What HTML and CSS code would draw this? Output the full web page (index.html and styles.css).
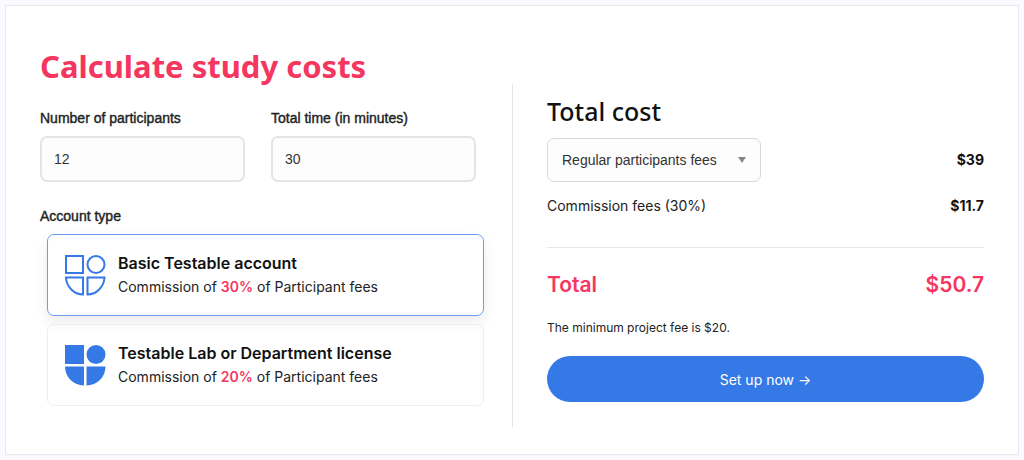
FILE: index.html
```html
<!DOCTYPE html>
<html lang="en">
<head>
    <meta charset="UTF-8">
    <meta name="viewport" content="width=device-width, initial-scale=1.0">
    <title>Calculate study costs</title>
    <link rel="stylesheet" href="styles.css">
</head>
<body>
    <form class="calculator">
        <div class="settings">
            <h1 class="title">Calculate study costs</h1>
            <div class="fields">
                <div class="field">
                    <label class="label" for="participants">Number of participants</label>
                    <input class="control" id="participants" type="text" inputmode="numeric" value="12">
                </div>
                <div class="field">
                    <label class="label" for="minutes">Total time (in minutes)</label>
                    <input class="control" id="minutes" type="text" inputmode="numeric" value="30">
                </div>
            </div>
            <div class="label" id="account-label">Account type</div>
            <div class="accounts" role="radiogroup" aria-labelledby="account-label">
                <label class="account">
                    <input class="account-radio" type="radio" name="account" value="basic" checked>
                    <svg class="account-icon outline" viewBox="0 0 42 42" aria-hidden="true">
                        <rect x="2" y="2" width="17" height="17"/>
                        <circle cx="32" cy="10.5" r="8.5"/>
                        <path d="M2 23.5H19V40.5C10 40.5 2.5 33 2 23.5Z"/>
                        <path d="M23.5 23.5H40.5C40 33 32.5 40.5 23.5 40.5Z"/>
                    </svg>
                    <span class="account-text">
                        <span class="account-name">Basic Testable account</span>
                        <span class="account-fee">Commission of <b class="rate">30%</b> of Participant fees</span>
                    </span>
                </label>
                <label class="account">
                    <input class="account-radio" type="radio" name="account" value="license">
                    <svg class="account-icon solid" viewBox="0 0 42 42" aria-hidden="true">
                        <rect x="1" y="1" width="19" height="19"/>
                        <circle cx="32" cy="10.5" r="9.5"/>
                        <path d="M1 22.5H20V41.5C9.5 41.5 1 33 1 22.5Z"/>
                        <path d="M22.5 22.5H41.5C41.5 33 33 41.5 22.5 41.5Z"/>
                    </svg>
                    <span class="account-text">
                        <span class="account-name">Testable Lab or Department license</span>
                        <span class="account-fee">Commission of <b class="rate">20%</b> of Participant fees</span>
                    </span>
                </label>
            </div>
        </div>
        <div class="summary">
            <h2 class="subtitle">Total cost</h2>
            <div class="row">
                <div class="select-wrap">
                    <select class="control select" aria-label="Participants fees">
                        <option>Regular participants fees</option>
                    </select>
                    <svg class="arrow" viewBox="0 0 8 6" aria-hidden="true"><path d="M0 0H8L4 6Z"/></svg>
                </div>
                <span class="amount">$39</span>
            </div>
            <div class="row commission">
                <span>Commission fees (30%)</span>
                <span class="amount">$11.7</span>
            </div>
            <div class="row total">
                <span>Total</span>
                <span>$50.7</span>
            </div>
            <p class="note">The minimum project fee is $20.</p>
            <button class="submit" type="button">Set up now →</button>
        </div>
    </form>
</body>
</html>
```
FILE: styles.css
```css
* { margin: 0; padding: 0; box-sizing: border-box; }
body {
    padding: 5px;
    background: #f9f9ff;
    color: #222;
    font-family: Inter, sans-serif;
    font-size: 14px;
    line-height: 20px;
}
.calculator {
    display: grid;
    grid-template-columns: 1fr 1fr;
    padding: 0 34px;
    background: #fff;
    border: 1px solid #e8e8ef;
}
.settings {
    padding: 40px 36px 48px 0;
}
.title {
    margin-bottom: 22px;
    color: #f5365f;
    font-family: "Noto Sans", sans-serif;
    font-size: 31px;
    font-weight: 700;
    line-height: 40px;
}
.fields {
    display: grid;
    grid-template-columns: 1fr 1fr;
    gap: 26px;
    margin-bottom: 24px;
}
.label {
    display: block;
    margin-bottom: 8px;
    font-family: "Liberation Sans", sans-serif;
    font-size: 14px;
    -webkit-text-stroke: 0.4px #222;
}
.control {
    display: block;
    width: 100%;
    height: 46px;
    padding: 0 12px;
    background: #fdfdfd;
    border: 2px solid #e5e5e5;
    border-radius: 7px;
    color: #333;
    font-family: "Liberation Sans", sans-serif;
    font-size: 14px;
}
.accounts {
    display: grid;
    gap: 8px;
    margin: 0 -8px 0 7px;
}
.account {
    display: flex;
    align-items: center;
    gap: 12px;
    padding: 16px;
    border: 1px solid #eee;
    border-radius: 7px;
    cursor: pointer;
}
.account:has(:checked) {
    border-color: #6a9df0;
    box-shadow: 0 6px 14px rgba(0, 0, 0, 0.08);
}
.account-radio {
    position: absolute;
    opacity: 0;
}
.account-icon {
    width: 42px;
    height: 42px;
}
.outline {
    fill: none;
    stroke: #3579e6;
    stroke-width: 2;
}
.solid { fill: #3579e6; }
.account-text {
    display: grid;
    line-height: 24px;
}
.account-name {
    color: #111;
    font-size: 16px;
    font-weight: 600;
}
.rate {
    color: #f5365f;
    font-weight: 600;
}
.summary {
    align-self: start;
    margin: 78px 0 27px;
    padding: 11px 0 25px 34px;
    border-left: 1px solid #e4e4e4;
}
.subtitle {
    margin-bottom: 11px;
    color: #111;
    font-family: "Noto Sans", sans-serif;
    font-size: 25px;
    font-weight: 500;
    line-height: 32px;
}
.row {
    display: flex;
    align-items: center;
    justify-content: space-between;
}
.select-wrap {
    position: relative;
    width: 214px;
}
.select {
    height: 44px;
    border-width: 1px;
    border-color: #d8d8d8;
    padding: 0 14px;
    appearance: none;
}
.arrow {
    position: absolute;
    top: 19px;
    right: 15px;
    width: 8px;
    height: 6px;
    fill: #888;
    pointer-events: none;
}
.amount {
    color: #111;
    font-weight: 700;
}
.commission {
    padding: 14px 0 31px;
    border-bottom: 1px solid #e8e8e8;
}
.total {
    padding: 23px 0 19px;
    color: #f5365f;
    font-size: 21px;
    font-weight: 600;
    line-height: 28px;
}
.note {
    margin-bottom: 18px;
    font-size: 12px;
}
.submit {
    display: block;
    width: 100%;
    height: 46px;
    background: #3579e6;
    border: none;
    border-radius: 23px;
    color: #fff;
    font-family: inherit;
    font-size: 14px;
    cursor: pointer;
}
```
